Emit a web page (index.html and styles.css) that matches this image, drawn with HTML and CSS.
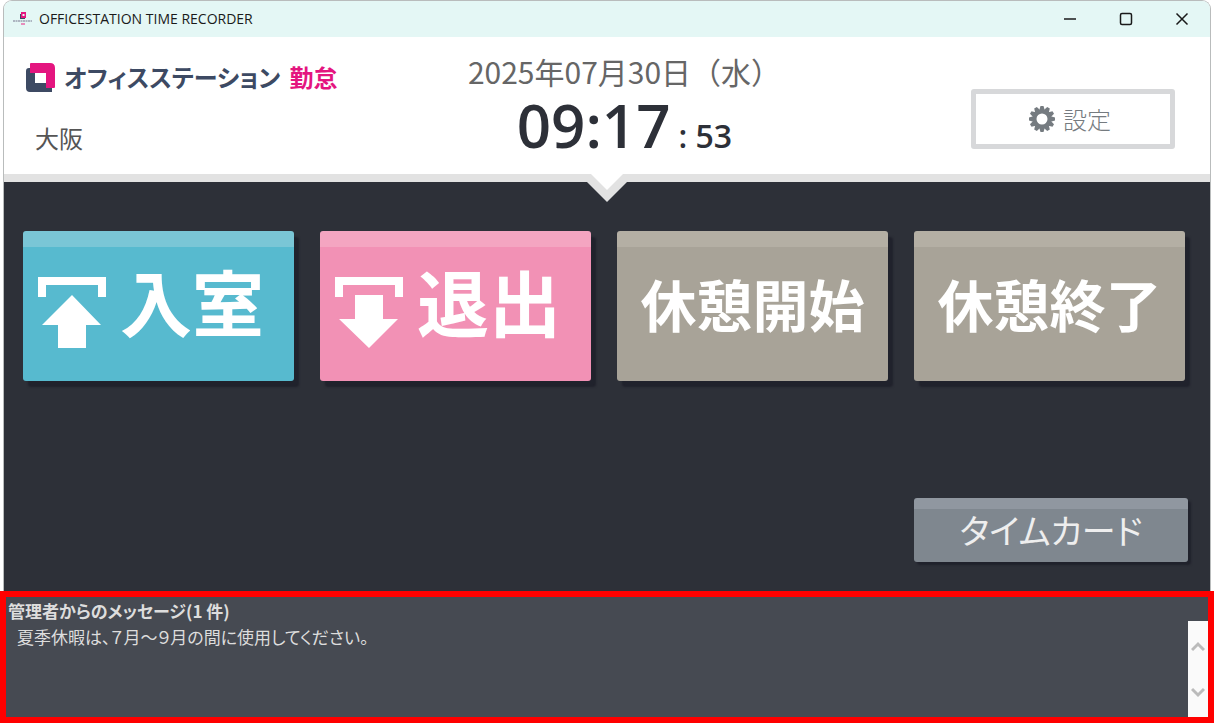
FILE: index.html
```html
<!DOCTYPE html>
<html lang="ja">
<head>
    <meta charset="UTF-8">
    <meta name="viewport" content="width=device-width, initial-scale=1.0">
    <title>OFFICESTATION TIME RECORDER</title>
    <link rel="stylesheet" href="styles.css">
</head>
<body>
    <div class="window">
        <div class="titlebar">
            <svg class="app-icon" width="20" height="14" viewBox="0 0 20 14">
                <path d="M7 2h2v4h3v1H7z" fill="#3d4a63"/>
                <path d="M8 0h5v6h-5z M9.500 2v2h2v-2z" fill="#e4157f" fill-rule="evenodd"/>
                <path d="M0 9h19" stroke="#9aa0b0" stroke-width="1.500" stroke-dasharray="2 .5"/>
                <path d="M8 12h4" stroke="#e86aa8" stroke-width="1.500"/>
            </svg>
            <span class="title">OFFICESTATION TIME RECORDER</span>
            <div class="window-buttons">
                <button type="button" aria-label="最小化"><svg width="14" height="14" viewBox="0 0 14 14"><path d="M1 7h12"/></svg></button>
                <button type="button" aria-label="最大化"><svg width="14" height="14" viewBox="0 0 14 14"><rect x="1.500" y="1.500" width="11" height="11" rx="1.500"/></svg></button>
                <button type="button" aria-label="閉じる"><svg width="14" height="14" viewBox="0 0 14 14"><path d="M1.500 1.500l11 11M12.500 1.500l-11 11"/></svg></button>
            </div>
        </div>

        <header class="header">
            <div class="brand">
                <div class="logo">
                    <svg width="30" height="30" viewBox="0 0 30 30">
                        <path d="M3 5H5V10H9V20H20V25H26V29H4Q0 29 0 25V8Q0 5 3 5z" fill="#3d4a63"/>
                        <path d="M4 1Q4 0 5 0H24Q29 0 29 5V24Q29 25 28 25H20V10H4z" fill="#e4157f"/>
                    </svg>
                    <span class="logo-name">オフィスステーション</span>
                    <span class="logo-product">勤怠</span>
                </div>
                <div class="place">大阪</div>
            </div>
            <div class="datetime">
                <div class="date">2025年07月30日（水）</div>
                <div class="clock">09:17<span class="seconds">: 53</span></div>
            </div>
            <button type="button" class="settings">
                <svg width="26" height="26" viewBox="-13 -13 26 26">
                    <g fill="#757b80">
                        <path id="tooth" d="M-3 -8L-1.500 -13H1.500L3 -8z"/>
                        <use href="#tooth" transform="rotate(30)"/>
                        <use href="#tooth" transform="rotate(60)"/>
                        <use href="#tooth" transform="rotate(90)"/>
                        <use href="#tooth" transform="rotate(120)"/>
                        <use href="#tooth" transform="rotate(150)"/>
                        <use href="#tooth" transform="rotate(180)"/>
                        <use href="#tooth" transform="rotate(210)"/>
                        <use href="#tooth" transform="rotate(240)"/>
                        <use href="#tooth" transform="rotate(270)"/>
                        <use href="#tooth" transform="rotate(300)"/>
                        <use href="#tooth" transform="rotate(330)"/>
                    </g>
                    <circle r="7.500" fill="none" stroke="#757b80" stroke-width="4"/>
                </svg>
                設定
            </button>
            <svg class="notch" width="40" height="28" viewBox="0 0 40 28">
                <path d="M0 8L20 28L40 8V0H0z" fill="#e2e2e2"/>
                <path d="M4 0L20 16L36 0z" fill="#fff"/>
            </svg>
        </header>

        <main class="main">
            <div class="punch-buttons">
                <button type="button" class="punch enter">
                    <svg width="68" height="72" viewBox="0 0 68 72">
                        <path d="M0 0H68V20H60V8H8V20H0z"/>
                        <path d="M34 18L63 48H48V71H20V48H4z"/>
                    </svg>
                    入室
                </button>
                <button type="button" class="punch leave">
                    <svg width="68" height="72" viewBox="0 0 68 72">
                        <path d="M0 0H68V20H60V8H8V20H0z"/>
                        <path d="M20 18H48V42H63L34 71L4 42H20z"/>
                    </svg>
                    退出
                </button>
                <button type="button" class="punch break">休憩開始</button>
                <button type="button" class="punch break">休憩終了</button>
            </div>
            <button type="button" class="timecard">タイムカード</button>
        </main>
    </div>

    <section class="messages">
        <h2>管理者からのメッセージ(1 件)</h2>
        <div class="message-body">
            <p>夏季休暇は、７月～９月の間に使用してください。</p>
            <div class="scroll">
                <button type="button" aria-label="上へ"><svg width="14" height="11" viewBox="0 0 14 11"><path d="M1 9l6-6l6 6"/></svg></button>
                <button type="button" aria-label="下へ"><svg width="14" height="11" viewBox="0 0 14 11"><path d="M1 2l6 6l6-6"/></svg></button>
            </div>
        </div>
    </section>
</body>
</html>
```
FILE: styles.css
```css
* {
    box-sizing: border-box;
}
body {
    margin: 0;
    min-height: 100vh;
    display: flex;
    flex-direction: column;
    background: #fff;
    font-family: "Noto Sans CJK JP", sans-serif;
}
button {
    padding: 0;
    border: none;
    background: none;
    font-family: inherit;
    cursor: pointer;
}
.window {
    flex: 1;
    display: flex;
    flex-direction: column;
    margin: 0 3px;
    border: 1px solid #b9bcbc;
    border-bottom: none;
    border-radius: 9px 9px 0 0;
    overflow: hidden;
}

/* title bar */
.titlebar {
    display: flex;
    align-items: center;
    height: 36px;
    padding-left: 9px;
    background: #e4f7f5;
}
.title {
    margin: 0 0 2px 6px;
    font-family: "Open Sans", sans-serif;
    font-size: 14px;
    color: #1a1a1a;
}
.window-buttons {
    display: flex;
    margin-left: auto;
}
.window-buttons button {
    width: 56px;
    height: 36px;
}
.window-buttons svg {
    display: block;
    margin: 0 auto;
    fill: none;
    stroke: #1a1a1a;
    stroke-width: 1.5;
}

/* header */
.header {
    position: relative;
    display: grid;
    grid-template-columns: 1fr auto 1fr;
    height: 145px;
    padding: 0 35px 0 22px;
    background: #fff;
    border-bottom: 8px solid #e2e2e2;
}
.logo {
    display: flex;
    height: 30px;
    margin-top: 26px;
    font-size: 24px;
    font-weight: 700;
    line-height: 28px;
    white-space: nowrap;
}
.logo-name {
    margin-left: 8px;
    color: #3d4a63;
    font-feature-settings: "palt";
}
.logo-product {
    margin-left: 9px;
    color: #e4157f;
}
.place {
    margin: 27px 0 0 9px;
    font-size: 24px;
    line-height: 36px;
    color: #555;
}
.datetime {
    padding-left: 48px;
    text-align: center;
    white-space: nowrap;
}
.date {
    margin-top: 16px;
    font-size: 30px;
    line-height: 36px;
    color: #666;
}
.clock {
    font-family: "Open Sans", sans-serif;
    font-size: 60px;
    font-weight: 600;
    line-height: 72px;
    color: #2d3038;
}
.seconds {
    margin-left: 8px;
    font-size: 32px;
}
.settings {
    justify-self: end;
    display: flex;
    align-items: center;
    justify-content: center;
    gap: 8px;
    width: 204px;
    height: 60px;
    margin-top: 52px;
    padding: 0 6px 0 0;
    border: 5px solid #d7d8da;
    border-radius: 3px;
    font-size: 24px;
    font-weight: 300;
    line-height: 36px;
    color: #757b80;
}
.notch {
    position: absolute;
    top: 100%;
    left: 50%;
    margin-left: -20px;
}

/* punch buttons */
.main {
    flex: 1;
    display: flex;
    flex-direction: column;
    padding: 49px 22px 29px 19px;
    background: #2d3038;
}
.punch-buttons {
    display: grid;
    grid-template-columns: repeat(4, 1fr);
    gap: 26px;
    padding-right: 3px;
}
.punch {
    display: flex;
    align-items: center;
    justify-content: center;
    height: 150px;
    padding-bottom: 6px;
    border-radius: 3px;
    box-shadow: 5px 6px 2px #20222c;
    font-size: 56px;
    font-weight: 700;
    line-height: 72px;
    color: #fff;
    white-space: nowrap;
}
.punch svg {
    margin: 26px 14px 0 0;
    fill: #fff;
}
.enter, .leave {
    justify-content: flex-start;
    padding: 0 0 12px 15px;
    font-size: 72px;
}
.enter { background: linear-gradient(#7ac6d6 16px, #57bacf 16px); }
.leave { background: linear-gradient(#f4a5c1 16px, #f291b5 16px); }
.break { background: linear-gradient(#b4afa4 16px, #a8a398 16px); }
.timecard {
    align-self: flex-end;
    width: 274px;
    height: 64px;
    margin-top: auto;
    border-radius: 3px;
    background: linear-gradient(#9097a0 11px, #7f878f 11px);
    box-shadow: 3px 3px 2px #20222c;
    font-size: 34px;
    line-height: 62px;
    color: #eee;
    font-feature-settings: "palt";
}

/* messages */
.messages {
    display: flex;
    flex-direction: column;
    height: 132px;
    border: 6px solid #f00;
    background: #464a52;
    color: #ddd;
    font-feature-settings: "palt";
}
.messages h2 {
    margin: 0;
    padding: 4px 2px 0;
    font-size: 17px;
    font-weight: 700;
    line-height: 20px;
}
.message-body {
    flex: 1;
    display: flex;
    justify-content: space-between;
}
.message-body p {
    margin: 4px 0 0 11px;
    font-size: 17px;
    line-height: 24px;
}
.scroll {
    display: flex;
    flex-direction: column;
    justify-content: space-between;
    width: 20px;
    padding: 16px 0;
    background: #fafafa;
}
.scroll button {
    height: 18px;
}
.scroll svg {
    display: block;
    margin: 0 auto;
    fill: none;
    stroke: #bbb;
    stroke-width: 3;
}
```
